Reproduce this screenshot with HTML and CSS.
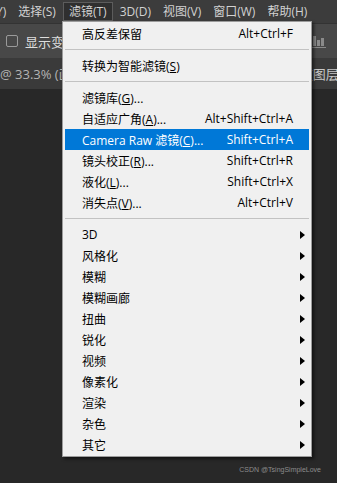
FILE: index.html
```html
<!DOCTYPE html>
<html lang="zh-CN">
<head>
    <meta charset="UTF-8">
    <meta name="viewport" content="width=device-width, initial-scale=1.0">
    <title>滤镜菜单</title>
    <link rel="stylesheet" href="styles.css">
</head>
<body>

    <div class="app">
        <div class="menubar">
            <span class="mb-item mb-cut">Y)</span>
            <span class="mb-item">选择(S)</span>
            <span class="mb-item active">滤镜(T)</span>
            <span class="mb-item">3D(D)</span>
            <span class="mb-item">视图(V)</span>
            <span class="mb-item">窗口(W)</span>
            <span class="mb-item">帮助(H)</span>
        </div>

        <div class="options">
            <div class="opt-left">
                <span class="checkbox"></span>
                <span class="opt-label">显示变换控件</span>
            </div>
            <svg class="histo" width="14" height="14" viewBox="0 0 14 14">
                <rect x="1" y="1" width="3" height="10" fill="#8a8a8a"/>
                <rect x="5" y="5" width="3" height="6" fill="#8a8a8a"/>
                <rect x="9" y="3" width="3" height="8" fill="#8a8a8a"/>
                <rect x="0" y="12" width="14" height="1" fill="#8a8a8a"/>
            </svg>
        </div>

        <div class="tabs">
            <span class="tab-left">@ 33.3% (画布, RGB/8#)</span>
            <span class="tab-right">(图层 1, RGB/8)</span>
        </div>

        <div class="canvas">
            <span class="watermark">CSDN @TsingSimpleLove</span>
        </div>

        <div class="dropdown">
            <div class="item"><span class="label">高反差保留</span><span class="key">Alt+Ctrl+F</span><span class="sub"></span></div>
            <div class="sep"></div>
            <div class="item"><span class="label">转换为智能滤镜(<u>S</u>)</span><span class="sub"></span></div>
            <div class="sep"></div>
            <div class="item"><span class="label">滤镜库(<u>G</u>)...</span><span class="sub"></span></div>
            <div class="item"><span class="label">自适应广角(<u>A</u>)...</span><span class="key">Alt+Shift+Ctrl+A</span><span class="sub"></span></div>
            <div class="item selected"><span class="label">Camera Raw 滤镜(<u>C</u>)...</span><span class="key">Shift+Ctrl+A</span><span class="sub"></span></div>
            <div class="item"><span class="label">镜头校正(<u>R</u>)...</span><span class="key">Shift+Ctrl+R</span><span class="sub"></span></div>
            <div class="item"><span class="label">液化(<u>L</u>)...</span><span class="key">Shift+Ctrl+X</span><span class="sub"></span></div>
            <div class="item"><span class="label">消失点(<u>V</u>)...</span><span class="key">Alt+Ctrl+V</span><span class="sub"></span></div>
            <div class="sep"></div>
            <div class="item"><span class="label">3D</span><span class="sub arrow"></span></div>
            <div class="item"><span class="label">风格化</span><span class="sub arrow"></span></div>
            <div class="item"><span class="label">模糊</span><span class="sub arrow"></span></div>
            <div class="item"><span class="label">模糊画廊</span><span class="sub arrow"></span></div>
            <div class="item"><span class="label">扭曲</span><span class="sub arrow"></span></div>
            <div class="item"><span class="label">锐化</span><span class="sub arrow"></span></div>
            <div class="item"><span class="label">视频</span><span class="sub arrow"></span></div>
            <div class="item"><span class="label">像素化</span><span class="sub arrow"></span></div>
            <div class="item"><span class="label">渲染</span><span class="sub arrow"></span></div>
            <div class="item"><span class="label">杂色</span><span class="sub arrow"></span></div>
            <div class="item"><span class="label">其它</span><span class="sub arrow"></span></div>
        </div>
    </div>

</body>
</html>
```

FILE: styles.css
```css
body {
    margin: 0;
    background-color: #282828;
    font-family: "Open Sans", "Noto Sans CJK SC", sans-serif;
}

.app {
    position: relative;
    width: 337px;
    height: 483px;
    overflow: hidden;
    display: flex;
    flex-direction: column;
}

.menubar {
    height: 23px;
    display: flex;
    align-items: center;
    background: #3c3c3c;
    border-bottom: 1px solid #333;
    color: #d2d2d2;
    font-size: 12px;
    white-space: nowrap;
}

.mb-item {
    padding: 0 6px;
    line-height: 17px;
}

.mb-cut {
    margin-left: -10px;
}

.mb-item.active {
    background: #2f2f2f;
    border: 1px solid #5c5c5c;
    padding: 0 5px;
    margin: 0 1px;
}

.options {
    height: 34px;
    display: flex;
    align-items: center;
    background: #484848;
}

.opt-left {
    flex: 0 0 312px;
    display: flex;
    align-items: center;
    overflow: hidden;
    white-space: nowrap;
}

.checkbox {
    width: 10px;
    height: 10px;
    margin-left: 6px;
    border: 1px solid #9a9a9a;
    border-radius: 2px;
}

.opt-label {
    margin-left: 7px;
    color: #dedede;
    font-size: 13px;
}

.histo {
    margin-top: 1px;
}

.tabs {
    height: 31px;
    display: flex;
    align-items: center;
    background: #3a3a3a;
    color: #b4b4b4;
    font-size: 13px;
    white-space: nowrap;
}

.tab-left {
    flex: 0 0 309px;
    overflow: hidden;
}

.tab-right {
    color: #c8c8c8;
}

.canvas {
    flex: 1;
    display: flex;
    justify-content: flex-end;
    align-items: flex-end;
    padding: 0 16px 10px 0;
}

.watermark {
    color: #8c8c8c;
    font-size: 7px;
    font-family: "Liberation Sans", sans-serif;
}

/* filter dropdown, lies over the toolbar */
.dropdown {
    position: absolute;
    left: 62px;
    top: 21px;
    width: 244px;
    padding: 1px 2px;
    background: #f0f0f0;
    border: 1px solid #9c9c9c;
    box-shadow: 2px 2px 3px rgba(0, 0, 0, 0.55);
    font-size: 12px;
    color: #000;
}

.item {
    height: 21px;
    display: flex;
    align-items: center;
    padding-left: 17px;
    white-space: nowrap;
}

.item .label {
    flex: 1;
}

.item .sub {
    width: 16px;
    height: 21px;
    display: flex;
    align-items: center;
}

.arrow::after {
    content: "";
    margin-left: 7px;
    border-left: 5px solid #000;
    border-top: 4px solid transparent;
    border-bottom: 4px solid transparent;
}

.item.selected {
    background: #0078d7;
    color: #fff;
}

.sep {
    height: 1px;
    margin: 5px 0;
    background: #c2c2c2;
}
```
